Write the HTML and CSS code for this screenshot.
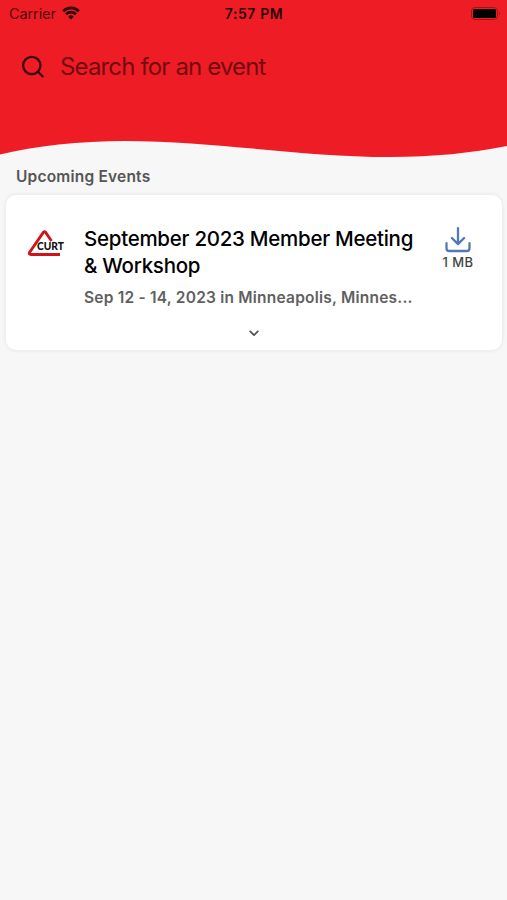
FILE: index.html
```html
<!DOCTYPE html>
<html lang="en">
<head>
    <meta charset="UTF-8">
    <meta name="viewport" content="width=device-width, initial-scale=1.0">
    <title>Events</title>
    <link rel="stylesheet" href="styles.css">
</head>
<body>
    <header class="header">
        <div class="status-bar">
            <div class="carrier">
                <span class="carrier-name">Carrier</span>
                <svg class="wifi" width="18" height="14" viewBox="0 0 18 14">
                    <path d="M1.2 5.2a11 11 0 0 1 15.6 0M4 8.2a7.1 7.1 0 0 1 10 0" fill="none" stroke="currentColor" stroke-width="2.7"/>
                    <path d="M9 13.6l-2.8-2.9a4 4 0 0 1 5.6 0z" fill="currentColor"/>
                </svg>
            </div>
            <span class="time">7:57 PM</span>
            <svg class="battery" width="30" height="14" viewBox="0 0 30 14">
                <rect x="0.5" y="0.5" width="26" height="12" rx="3.5" fill="none" stroke="#a3141a"/>
                <rect x="2" y="2" width="23" height="9" rx="1.5" fill="#000"/>
                <path d="M28 4.8v3.6q2-1.8 0-3.6z" fill="#a3141a"/>
            </svg>
        </div>
        <div class="search">
            <svg class="search-icon" width="24" height="24" viewBox="0 0 24 24">
                <circle cx="10.8" cy="10.5" r="8.7"/>
                <path d="M17 16.8l4.7 4.7"/>
            </svg>
            <span class="search-text">Search for an event</span>
        </div>
        <svg class="wave" width="507" height="30" viewBox="0 0 507 30" preserveAspectRatio="none">
            <path d="M0 0H507V16C470 23 435 27 390 27C300 27 215 11 125 11C80 11 35 16 0 24.5Z" fill="#ee1d25"/>
        </svg>
    </header>

    <main class="events">
        <h2 class="section-title">Upcoming Events</h2>
        <article class="card">
            <div class="card-main">
                <svg class="logo" width="44" height="30" viewBox="0 0 44 30">
                    <path d="M25.5 12L19.5 3.2Q18.5 2 17.5 3.2L3.5 23.5Q2.5 25.5 5 25.5H34" fill="none" stroke="#d0131b" stroke-width="2.8"/>
                    <text x="11" y="21" textLength="27" lengthAdjust="spacingAndGlyphs">CURT</text>
                </svg>
                <div class="info">
                    <h3 class="event-name">September 2023 Member Meeting &amp; Workshop</h3>
                    <p class="event-meta">Sep 12 - 14, 2023 in Minneapolis, Minnes...</p>
                </div>
                <div class="download">
                    <svg width="26" height="26" viewBox="0 0 26 26">
                        <path d="M13 1.2v15.8M6.9 11l6.1 6.1 6.1-6.1M1.5 16.2v5q0 2.8 2.8 2.8h17.4q2.8 0 2.8-2.8v-5"/>
                    </svg>
                    <span class="size">1 MB</span>
                </div>
            </div>
            <svg class="chevron" width="10" height="7" viewBox="0 0 10 7">
                <path d="M1.2 1.4l3.8 3.8 3.8-3.8"/>
            </svg>
        </article>
    </main>
</body>
</html>
```
FILE: styles.css
```css
body {
    font-family: Inter, "Liberation Sans", sans-serif;
    background-color: #f7f7f7;
    margin: 0;
    min-height: 900px;
}
.header {
    height: 160px;
    background: linear-gradient(#ee1d25, #ee1d25) no-repeat 0 0 / 100% 131px;
    display: flex;
    flex-direction: column;
}
.status-bar {
    height: 27px;
    display: grid;
    grid-template-columns: 1fr auto 1fr;
    align-items: center;
    padding: 0 6px 0 9px;
    color: #2b0508;
}
.carrier {
    display: flex;
    align-items: center;
    gap: 6px;
}
.carrier-name {
    font-size: 14.5px;
    line-height: 18px;
    letter-spacing: -0.1px;
    color: #55090d;
}
.wifi {
    margin-top: -2px;
}
.time {
    margin-left: -2px;
    font-size: 14px;
    font-weight: 600;
    line-height: 18px;
    letter-spacing: 0.6px;
}
.battery {
    justify-self: end;
}
.search {
    height: 80px;
    display: flex;
    align-items: center;
    padding-left: 21px;
    gap: 15px;
}
.search-icon {
    fill: none;
    stroke: #3a070a;
    stroke-width: 2.3;
    stroke-linecap: round;
}
.search-text {
    font-size: 24px;
    line-height: 30px;
    letter-spacing: -0.85px;
    color: #740b10;
}
.wave {
    display: block;
    width: 100%;
    height: 30px;
    margin-top: 23px;
}
.events {
    padding: 0 5px 0 6px;
}
.section-title {
    margin: 0;
    padding: 7px 10px 8px;
    font-size: 15.5px;
    font-weight: 600;
    line-height: 20px;
    letter-spacing: 0.2px;
    color: #555;
}
.card {
    box-sizing: border-box;
    height: 155px;
    background-color: #fff;
    border-radius: 10px;
    box-shadow: 0 0 5px rgba(0, 0, 0, 0.09);
    display: flex;
    flex-direction: column;
    align-items: center;
    padding-top: 30px;
}
.card-main {
    width: 100%;
    display: flex;
    align-items: flex-start;
}
.logo {
    margin: 4px 14px 0 20px;
}
.logo text {
    font-family: Lato, sans-serif;
    font-size: 12px;
    font-weight: 900;
    fill: #111;
}
.info {
    width: 334px;
}
.event-name {
    margin: 0;
    font-size: 20.5px;
    font-weight: 500;
    line-height: 27px;
    letter-spacing: -0.27px;
    color: #000;
}
.event-meta {
    margin: 9px 0 0;
    font-size: 15.5px;
    font-weight: 600;
    line-height: 20px;
    letter-spacing: 0.22px;
    color: #606060;
    white-space: nowrap;
}
.download {
    width: 80px;
    padding-top: 2px;
    display: flex;
    flex-direction: column;
    align-items: center;
}
.download path {
    fill: none;
    stroke: #5577b5;
    stroke-width: 2.3;
    stroke-linecap: round;
    stroke-linejoin: round;
}
.size {
    margin-top: 1px;
    font-size: 13px;
    font-weight: 500;
    line-height: 16px;
    letter-spacing: 0.4px;
    color: #444;
}
.chevron {
    margin-top: 22px;
    fill: none;
    stroke: #555;
    stroke-width: 1.8;
    stroke-linecap: round;
    stroke-linejoin: round;
}
```
